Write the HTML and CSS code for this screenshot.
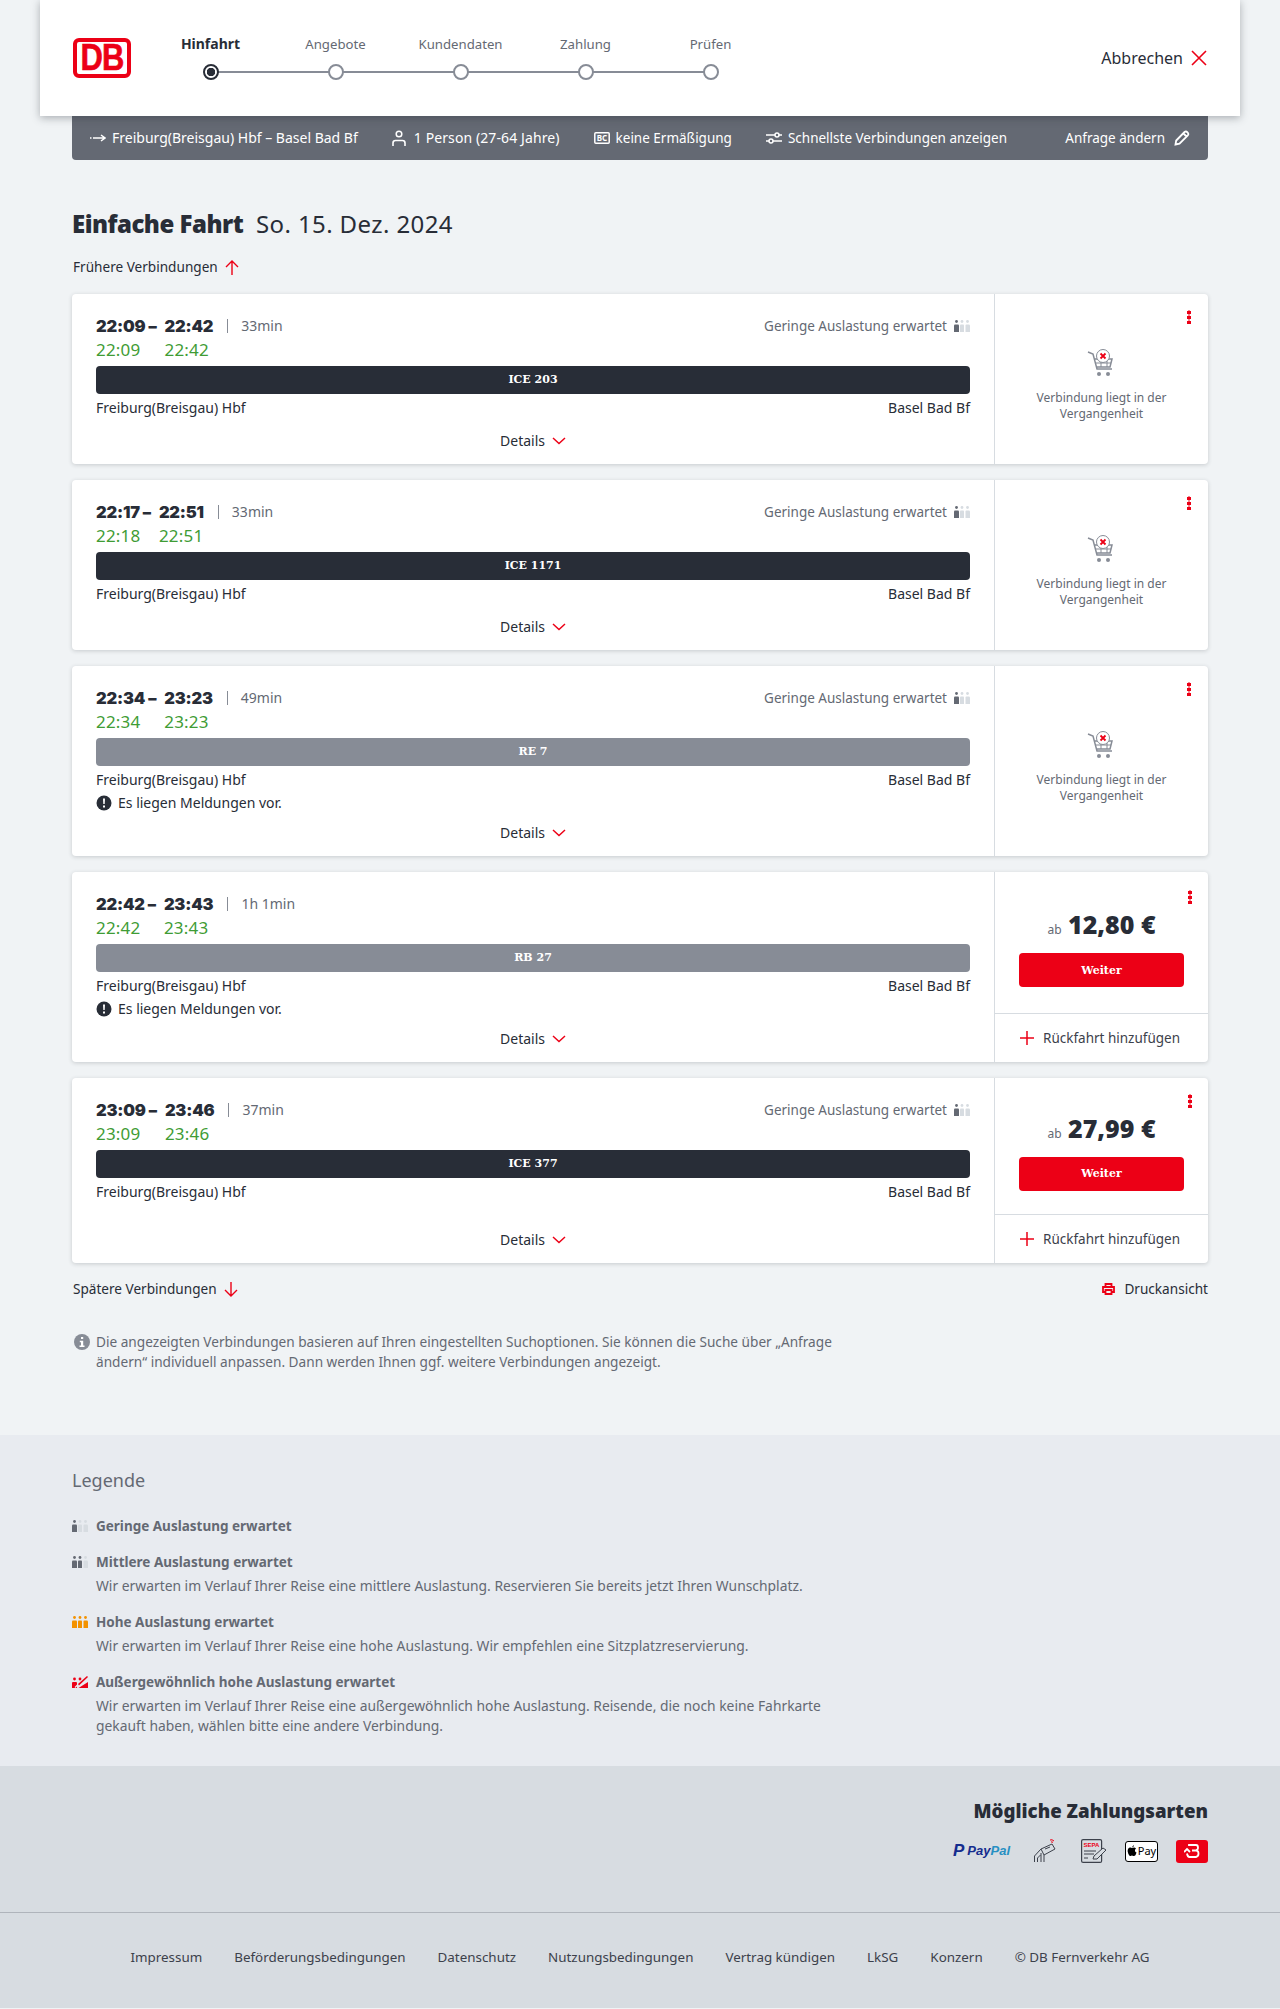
FILE: index.html
```html
<!DOCTYPE html>
<html lang="de">

<head>
    <meta charset="UTF-8">
    <meta name="viewport" content="width=device-width, initial-scale=1.0">
    <title>Verbindungen</title>
    <link rel="stylesheet" href="styles.css">
</head>

<body>
    <!-- Icons used more than once -->
    <svg class="defs" width="0" height="0">
        <symbol id="occ" viewBox="0 0 16 12">
            <circle cx="2.5" cy="1.5" r="1.4" fill="#646973"/>
            <path d="M0 5.5q0-1 1-1h3q1 0 1 1V12H0z" fill="#646973"/>
            <circle cx="8" cy="1.5" r="1.4" fill="#d7dce1"/>
            <path d="M6 5.5q0-1 .8-1h2.4q.8 0 .8 1V12H6z" fill="#d7dce1"/>
            <circle cx="13.5" cy="1.5" r="1.4" fill="#d7dce1"/>
            <path d="M11.500 5.500q0-1 .8-1h2.400q1.300 0 1.300 1V12h-4.500z" fill="#d7dce1"/>
        </symbol>
        <symbol id="cart" viewBox="0 0 30 30">
            <path d="M1 4l5 2 4 15h15M7 11h18l-2 8H9" fill="none" stroke="#878c96" stroke-width="1.500"/>
            <path d="M9 15h15M14 11v8M20 11v8" fill="none" stroke="#878c96" stroke-width="1"/>
            <circle cx="12" cy="26" r="2" fill="#878c96"/>
            <circle cx="21" cy="26" r="2" fill="#878c96"/>
            <circle cx="16" cy="8" r="6.500" fill="#fff" stroke="#878c96"/>
            <path d="M13.500 5.500l5 5M18.500 5.500l-5 5" stroke="#ec0016" stroke-width="1.800"/>
        </symbol>
        <symbol id="chev" viewBox="0 0 14 8">
            <path d="M1 1l6 5.500L13 1" fill="none" stroke="#ec0016" stroke-width="1.500"/>
        </symbol>
        <symbol id="excl" viewBox="0 0 16 16">
            <circle cx="8" cy="8" r="7.500" fill="#282d37"/>
            <path d="M7 3.500h2l-.3 5.500H7.300zM7 10.500h2v2H7z" fill="#fff"/>
        </symbol>
        <symbol id="plus" viewBox="0 0 16 16">
            <path d="M8 1v14M1 8h14" stroke="#ec0016" stroke-width="1.500"/>
        </symbol>
    </svg>

    <header class="topbar">
        <div class="logo"><span>DB</span></div>
        <ol class="steps">
            <li class="step current"><span class="step-name">Hinfahrt</span><i class="dot"></i></li>
            <li class="step"><span class="step-name">Angebote</span><i class="dot"></i></li>
            <li class="step"><span class="step-name">Kundendaten</span><i class="dot"></i></li>
            <li class="step"><span class="step-name">Zahlung</span><i class="dot"></i></li>
            <li class="step"><span class="step-name">Prüfen</span><i class="dot"></i></li>
        </ol>
        <a class="cancel">Abbrechen
            <svg width="16" height="16" viewBox="0 0 16 16"><path d="M1 1l14 14M15 1L1 15" stroke="#ec0016" stroke-width="1.600"/></svg>
        </a>
    </header>

    <div class="wrap">
        <div class="query">
            <span class="query-item">
                <svg width="16" height="8" viewBox="0 0 16 8"><path d="M0 4h1.500M3 4h11M11 1l4 3-4 3" fill="none" stroke="#fff" stroke-width="1.500"/></svg>
                Freiburg(Breisgau) Hbf – Basel Bad Bf
            </span>
            <span class="query-item query-person">
                <svg width="14" height="16" viewBox="0 0 14 16"><circle cx="7" cy="4" r="2.800" fill="none" stroke="#fff" stroke-width="1.500"/><path d="M1 16v-3q0-2.500 2.500-2.500h7q2.500 0 2.500 2.500v3" fill="none" stroke="#fff" stroke-width="1.600"/></svg>
                1 Person (27-64 Jahre)
            </span>
            <span class="query-item query-tight">
                <svg width="16" height="14" viewBox="0 0 16 14"><rect x=".8" y="1.800" width="14.400" height="10.400" rx="1" fill="none" stroke="#fff" stroke-width="1.500"/><text x="8" y="10" class="bc-text">BC</text></svg>
                keine Ermäßigung
            </span>
            <span class="query-item query-tight">
                <svg width="16" height="14" viewBox="0 0 16 14"><path d="M0 4h16M0 10h16" stroke="#fff" stroke-width="1.500"/><circle cx="11" cy="4" r="2" fill="#646973" stroke="#fff" stroke-width="1.500"/><circle cx="5" cy="10" r="2" fill="#646973" stroke="#fff" stroke-width="1.500"/></svg>
                Schnellste Verbindungen anzeigen
            </span>
            <a class="query-item query-tight query-edit">Anfrage ändern
                <svg width="16" height="16" viewBox="0 0 16 16"><path d="M1.500 14.500l.7-4L10.500 2q1.500-1.200 3 .3t.3 3l-8.300 8.300z M9.500 3.500l3 3" fill="none" stroke="#fff" stroke-width="1.800"/></svg>
            </a>
        </div>

        <h1 class="title"><b>Einfache Fahrt</b> So. 15. Dez. 2024</h1>

        <a class="page-link earlier">Frühere Verbindungen
            <svg width="14" height="15" viewBox="0 0 14 15"><path d="M7 15V1M1 7l6-6 6 6" fill="none" stroke="#ec0016" stroke-width="1.400"/></svg>
        </a>

        <!-- Connections -->
        <article class="card">
            <div class="card-main">
                <div class="card-head">
                    <div class="times">
                        <b>22:09 –</b><b>22:42</b><span class="duration">33min</span>
                        <span class="rt">22:09</span><span class="rt">22:42</span>
                    </div>
                    <span class="load">Geringe Auslastung erwartet <svg class="occ"><use href="#occ"/></svg></span>
                </div>
                <div class="train ice">ICE 203</div>
                <div class="stations"><span>Freiburg(Breisgau) Hbf</span><span>Basel Bad Bf</span></div>
                <a class="details">Details <svg class="chev"><use href="#chev"/></svg></a>
            </div>
            <div class="card-side past">
                <i class="kebab"></i>
                <svg class="cart"><use href="#cart"/></svg>
                <p>Verbindung liegt in der Vergangenheit</p>
            </div>
        </article>

        <article class="card">
            <div class="card-main">
                <div class="card-head">
                    <div class="times">
                        <b>22:17 –</b><b>22:51</b><span class="duration">33min</span>
                        <span class="rt">22:18</span><span class="rt">22:51</span>
                    </div>
                    <span class="load">Geringe Auslastung erwartet <svg class="occ"><use href="#occ"/></svg></span>
                </div>
                <div class="train ice">ICE 1171</div>
                <div class="stations"><span>Freiburg(Breisgau) Hbf</span><span>Basel Bad Bf</span></div>
                <a class="details">Details <svg class="chev"><use href="#chev"/></svg></a>
            </div>
            <div class="card-side past">
                <i class="kebab"></i>
                <svg class="cart"><use href="#cart"/></svg>
                <p>Verbindung liegt in der Vergangenheit</p>
            </div>
        </article>

        <article class="card">
            <div class="card-main">
                <div class="card-head">
                    <div class="times">
                        <b>22:34 –</b><b>23:23</b><span class="duration">49min</span>
                        <span class="rt">22:34</span><span class="rt">23:23</span>
                    </div>
                    <span class="load">Geringe Auslastung erwartet <svg class="occ"><use href="#occ"/></svg></span>
                </div>
                <div class="train regio">RE 7</div>
                <div class="stations"><span>Freiburg(Breisgau) Hbf</span><span>Basel Bad Bf</span></div>
                <div class="notice"><svg class="excl"><use href="#excl"/></svg> Es liegen Meldungen vor.</div>
                <a class="details">Details <svg class="chev"><use href="#chev"/></svg></a>
            </div>
            <div class="card-side past">
                <i class="kebab"></i>
                <svg class="cart"><use href="#cart"/></svg>
                <p>Verbindung liegt in der Vergangenheit</p>
            </div>
        </article>

        <article class="card">
            <div class="card-main">
                <div class="card-head">
                    <div class="times">
                        <b>22:42 –</b><b>23:43</b><span class="duration">1h 1min</span>
                        <span class="rt">22:42</span><span class="rt">23:43</span>
                    </div>
                </div>
                <div class="train regio">RB 27</div>
                <div class="stations"><span>Freiburg(Breisgau) Hbf</span><span>Basel Bad Bf</span></div>
                <div class="notice"><svg class="excl"><use href="#excl"/></svg> Es liegen Meldungen vor.</div>
                <a class="details">Details <svg class="chev"><use href="#chev"/></svg></a>
            </div>
            <div class="card-side">
                <div class="offer">
                    <div class="offer-inner">
                        <i class="kebab"></i>
                        <div class="price"><small>ab</small> 12,80 €</div>
                        <button class="next">Weiter</button>
                    </div>
                </div>
                <a class="return"><svg class="plus"><use href="#plus"/></svg> Rückfahrt hinzufügen</a>
            </div>
        </article>

        <article class="card">
            <div class="card-main">
                <div class="card-head">
                    <div class="times">
                        <b>23:09 –</b><b>23:46</b><span class="duration">37min</span>
                        <span class="rt">23:09</span><span class="rt">23:46</span>
                    </div>
                    <span class="load">Geringe Auslastung erwartet <svg class="occ"><use href="#occ"/></svg></span>
                </div>
                <div class="train ice">ICE 377</div>
                <div class="stations"><span>Freiburg(Breisgau) Hbf</span><span>Basel Bad Bf</span></div>
                <a class="details">Details <svg class="chev"><use href="#chev"/></svg></a>
            </div>
            <div class="card-side">
                <div class="offer">
                    <div class="offer-inner">
                        <i class="kebab"></i>
                        <div class="price"><small>ab</small> 27,99 €</div>
                        <button class="next">Weiter</button>
                    </div>
                </div>
                <a class="return"><svg class="plus"><use href="#plus"/></svg> Rückfahrt hinzufügen</a>
            </div>
        </article>

        <div class="after-list">
            <a class="page-link">Spätere Verbindungen
                <svg width="14" height="15" viewBox="0 0 14 15"><path d="M7 0v14M1 8l6 6 6-6" fill="none" stroke="#ec0016" stroke-width="1.400"/></svg>
            </a>
            <a class="page-link print">
                <svg width="13" height="12" viewBox="0 0 13 12"><path d="M3.500 3.500V1h6v2.500M3 9H1V4h11v5h-2M3.500 7h6v4h-6z" fill="none" stroke="#ec0016" stroke-width="1.800"/></svg>
                Druckansicht
            </a>
        </div>

        <div class="hint">
            <svg width="16" height="16" viewBox="0 0 16 16"><circle cx="8" cy="8" r="8" fill="#878c96"/><path d="M7 3h2.200v2H7zM5.800 6.800h3.400V11.500h1.300V13h-5v-1.500H7V8.300H5.800z" fill="#fff"/></svg>
            <p>Die angezeigten Verbindungen basieren auf Ihren eingestellten Suchoptionen. Sie können die Suche über „Anfrage ändern“ individuell anpassen. Dann werden Ihnen ggf. weitere Verbindungen angezeigt.</p>
        </div>
    </div>

    <section class="legend">
        <div class="wrap">
            <h2>Legende</h2>
            <dl class="legend-list">
                <div class="legend-item first">
                    <svg class="occ"><use href="#occ"/></svg>
                    <dt>Geringe Auslastung erwartet</dt>
                </div>
                <div class="legend-item">
                    <svg class="occ" viewBox="0 0 16 12"><circle cx="2.500" cy="1.500" r="1.400" fill="#646973"/><path d="M0 5.500q0-1 1-1h3q1 0 1 1V12H0z" fill="#646973"/><circle cx="8" cy="1.500" r="1.400" fill="#646973"/><path d="M6 5.500q0-1 .8-1h2.400q.8 0 .8 1V12H6z" fill="#646973"/><circle cx="13.500" cy="1.500" r="1.400" fill="#d7dce1"/><path d="M11.500 5.500q0-1 .8-1h2.400q1.300 0 1.300 1V12h-4.500z" fill="#d7dce1"/></svg>
                    <dt>Mittlere Auslastung erwartet</dt>
                    <dd>Wir erwarten im Verlauf Ihrer Reise eine mittlere Auslastung. Reservieren Sie bereits jetzt Ihren Wunschplatz.</dd>
                </div>
                <div class="legend-item">
                    <svg class="occ" viewBox="0 0 16 12"><circle cx="2.500" cy="1.500" r="1.400" fill="#f39200"/><path d="M0 5.500q0-1 1-1h3q1 0 1 1V12H0z" fill="#f39200"/><circle cx="8" cy="1.500" r="1.400" fill="#f39200"/><path d="M6 5.500q0-1 .8-1h2.400q.8 0 .8 1V12H6z" fill="#f39200"/><circle cx="13.500" cy="1.500" r="1.400" fill="#f39200"/><path d="M11.500 5.500q0-1 .8-1h2.400q1.300 0 1.300 1V12h-4.500z" fill="#f39200"/></svg>
                    <dt>Hohe Auslastung erwartet</dt>
                    <dd>Wir erwarten im Verlauf Ihrer Reise eine hohe Auslastung. Wir empfehlen eine Sitzplatzreservierung.</dd>
                </div>
                <div class="legend-item">
                    <svg class="occ" viewBox="0 0 16 12"><circle cx="2.500" cy="3" r="1.400" fill="#ec0016"/><path d="M0 7q0-1 1-1h3q1 0 1 1v5H0zM6.500 12h9.500V6z" fill="#ec0016"/><circle cx="8" cy="3" r="1.400" fill="#ec0016"/><path d="M3 11.500L14 .5" stroke="#e8ebf0" stroke-width="1.200"/><path d="M6 8L15 0l1 1-9 8.500z" fill="#ec0016"/></svg>
                    <dt>Außergewöhnlich hohe Auslastung erwartet</dt>
                    <dd>Wir erwarten im Verlauf Ihrer Reise eine außergewöhnlich hohe Auslastung. Reisende, die noch keine Fahrkarte gekauft haben, wählen bitte eine andere Verbindung.</dd>
                </div>
            </dl>
        </div>
    </section>

    <section class="payment">
        <div class="wrap">
            <h2>Mögliche Zahlungsarten</h2>
            <div class="pay-icons">
                <span class="paypal"><span class="pp-mark">P</span><em>Pay<span>Pal</span></em></span>
                <svg class="pay-hand" width="24" height="24" viewBox="0 0 24 24"><path d="M8 10l11-5 3 5-11 6zM1.500 23v-6l6.500-7M4.500 23v-4l3-3M8 14v9M11 16v7M12 10l5-2" fill="none" stroke="#3c414b" stroke-width="1"/><path d="M17 1q2-1 4 1M18 3q1-.500 2 .5" fill="none" stroke="#ec0016" stroke-width="1"/></svg>
                <svg class="pay-sepa" width="26" height="24" viewBox="0 0 26 24"><rect x=".6" y=".6" width="20" height="22.800" rx="1.500" fill="none" stroke="#3c414b" stroke-width="1.200"/><text x="10.500" y="8" class="sepa-text">SEPA</text><path d="M3 12h12M3 15h10M7 19H3" stroke="#3c414b"/><path d="M12 20l1-3 9-8 3 2-9 9z" fill="#d7dce1" stroke="#3c414b"/></svg>
                <span class="applepay"><svg width="10" height="12" viewBox="0 0 10 12"><path d="M7 0q.200 1.500-1.800 2.500Q5 1 7 0zM5 3q1-.500 2-.5 1.200 0 2 1-1.500 1-1 2.500.200 1 1.500 1.500-1 3.500-2.500 3.500-.700 0-1.300-.3-.800-.300-1.500 0-.500.300-1 .3-1 0-2-2.500Q0 6 1 4q1-1.500 2.500-1.400z" fill="#000"/></svg>Pay</span>
                <span class="bonus"><svg width="16" height="14" viewBox="0 0 16 14"><path d="M5 2V1h7q2 0 2 2.500T12 6.500H8m4 0q2.500 0 2.500 3T12 13H5.500q-2 0-2.500-3.500M0 8l3-3 3 3" fill="none" stroke="#fff" stroke-width="1.800"/></svg></span>
            </div>
        </div>
    </section>

    <footer class="footer">
        <a>Impressum</a>
        <a>Beförderungsbedingungen</a>
        <a>Datenschutz</a>
        <a>Nutzungsbedingungen</a>
        <a>Vertrag kündigen</a>
        <a>LkSG</a>
        <a>Konzern</a>
        <a>© DB Fernverkehr AG</a>
    </footer>
</body>

</html>
```

FILE: styles.css
```css
* {
    box-sizing: border-box;
}

body {
    margin: 0;
    background-color: #f0f3f5;
    color: #282d37;
    font-family: "Noto Sans", "Liberation Sans", sans-serif;
    font-size: 14px;
    line-height: 20px;
}

.defs {
    position: absolute;
}

.wrap {
    width: 1136px;
    margin: 0 auto;
}

/* Top bar */
.topbar {
    position: relative;
    z-index: 2;
    display: flex;
    align-items: flex-start;
    width: 1200px;
    height: 116px;
    margin: 0 auto;
    padding: 38px 33px 0;
    background-color: white;
    box-shadow: 0 2px 8px rgba(40, 45, 55, 0.35);
}

.logo {
    display: flex;
    justify-content: center;
    align-items: center;
    width: 58px;
    height: 40px;
    border: 4px solid #ec0016;
    border-radius: 6px;
    color: #ec0016;
    font-family: "Liberation Sans", sans-serif;
    font-size: 36px;
    font-weight: bold;
    letter-spacing: -1px;
    -webkit-text-stroke: 0.6px #ec0016;
}

.logo span {
    transform: scaleX(0.86);
}

.steps {
    display: flex;
    margin: -4px 0 0 17px;
    padding: 0;
    list-style: none;
}

.step {
    position: relative;
    display: flex;
    flex-direction: column;
    align-items: center;
    width: 125px;
    color: #646973;
    font-size: 13.2px;
}

.step-name {
    height: 20px;
    margin-bottom: 10px;
}

.step::after {
    content: "";
    position: absolute;
    top: 37px;
    left: 50%;
    width: 125px;
    height: 2px;
    background-color: #878c96;
}

.step:last-child::after {
    display: none;
}

.dot {
    position: relative;
    z-index: 1;
    width: 16px;
    height: 16px;
    border: 2px solid #878c96;
    border-radius: 50%;
    background-color: white;
}

.current {
    color: #282d37;
    font-size: 14px;
    font-weight: bold;
}

.current .dot {
    border-color: #282d37;
    background: radial-gradient(circle, #282d37 4px, white 4.500px);
}

.cancel {
    display: flex;
    align-items: center;
    gap: 8px;
    height: 40px;
    margin-left: auto;
    font-size: 16px;
}

/* Search summary */
.query {
    display: flex;
    align-items: center;
    gap: 34px;
    height: 44px;
    padding: 0 18px;
    border-radius: 0 0 4px 4px;
    background-color: #646973;
    color: white;
    font-size: 14px;
}

.query-item {
    display: flex;
    align-items: center;
    gap: 6px;
}

.query-person {
    gap: 8px;
    letter-spacing: 0.1px;
}

.query-tight {
    font-size: 13.5px;
}

.query-edit {
    gap: 9px;
    margin-left: auto;
}

.bc-text {
    fill: white;
    font-size: 8px;
    font-weight: bold;
    text-anchor: middle;
}

.title {
    margin: 46px 0 0;
    font-size: 24px;
    font-weight: normal;
    letter-spacing: 0.4px;
    line-height: 36px;
}

.title b {
    margin-right: 6px;
    font-weight: 900;
    letter-spacing: -0.5px;
}

.page-link {
    display: flex;
    align-items: center;
    gap: 7px;
    font-size: 13.6px;
}

.earlier {
    margin: 15px 0 17px 1px;
}

/* Connection cards */
.card {
    display: flex;
    min-height: 170px;
    margin-bottom: 16px;
    border-radius: 4px;
    background-color: white;
    box-shadow: 0 1px 4px rgba(40, 45, 55, 0.2);
}

.card-main {
    display: flex;
    flex-direction: column;
    flex: 1;
    padding: 20px 24px 11px;
}

.card-head {
    display: flex;
    justify-content: space-between;
    align-items: flex-start;
    height: 48px;
}

.times {
    display: grid;
    grid-template-columns: auto auto auto;
    justify-content: start;
    column-gap: 8px;
    line-height: 24px;
}

.times b {
    font-family: Inter, "Noto Sans", sans-serif;
    font-size: 16.5px;
    font-weight: 900;
    letter-spacing: -0.2px;
}

.duration {
    margin-left: 6px;
    padding-left: 14px;
    color: #646973;
    font-size: 14px;
    background: linear-gradient(#878c96, #878c96) left center / 1px 14px no-repeat;
}

.rt {
    color: #3f9c35;
    font-size: 17px;
    letter-spacing: 0.2px;
}

.load {
    display: flex;
    align-items: center;
    gap: 7px;
    height: 24px;
    color: #646973;
    font-size: 13.5px;
}

.occ {
    display: block;
    width: 16px;
    height: 12px;
}

.train {
    height: 28px;
    margin-top: 4px;
    border-radius: 4px;
    color: white;
    font-family: "DejaVu Serif", serif;
    font-size: 11px;
    font-weight: bold;
    line-height: 28px;
    text-align: center;
}

.ice {
    background-color: #282d37;
}

.regio {
    background-color: #878c96;
}

.stations {
    display: flex;
    justify-content: space-between;
    margin-top: 4px;
    font-size: 14px;
}

.notice {
    display: flex;
    align-items: center;
    gap: 6px;
    height: 22px;
    margin: 2px 0 7px;
    font-size: 14px;
}

.excl {
    width: 16px;
    height: 16px;
}

.details {
    display: flex;
    justify-content: center;
    align-items: center;
    gap: 7px;
    height: 24px;
    margin-top: auto;
    font-size: 14px;
}

.chev {
    width: 14px;
    height: 8px;
}

.card-side {
    position: relative;
    display: flex;
    flex-direction: column;
    flex: none;
    width: 214px;
    border-left: 1px solid #d7dce1;
}

.kebab {
    position: absolute;
    top: 16px;
    right: 17px;
    width: 4px;
    height: 14px;
    background: radial-gradient(circle, #ec0016 1.900px, transparent 2.200px) 0 0 / 4px 5px;
}

.past {
    justify-content: center;
    align-items: center;
    padding-top: 10px;
    color: #646973;
}

.cart {
    width: 30px;
    height: 30px;
    margin-top: 2px;
}

.past p {
    width: 150px;
    margin: 12px 0 0;
    font-size: 12px;
    line-height: 16px;
    text-align: center;
}

.offer {
    display: flex;
    flex: 1;
    align-items: center;
    padding: 23.5px 24px;
}

.offer-inner {
    position: relative;
    width: 100%;
}

.offer .kebab {
    top: -8px;
    right: -8px;
}

.price {
    height: 55px;
    padding-top: 8px;
    font-size: 25px;
    font-weight: 900;
    line-height: 36px;
    text-align: center;
}

.price small {
    color: #646973;
    font-size: 12px;
    font-weight: normal;
}

.next {
    display: block;
    width: 100%;
    height: 34px;
    border: 0;
    border-radius: 4px;
    background-color: #ec0016;
    color: white;
    font-family: "DejaVu Serif", serif;
    font-size: 11px;
    font-weight: bold;
}

.return {
    display: flex;
    align-items: center;
    gap: 8px;
    height: 49px;
    padding-left: 24px;
    border-top: 1px solid #d7dce1;
    color: #3c414b;
    font-size: 13.5px;
}

.plus {
    width: 16px;
    height: 16px;
}

.after-list {
    display: flex;
    justify-content: space-between;
    margin: 3px 0 0 1px;
}

.print {
    gap: 9px;
}

.hint {
    display: flex;
    gap: 6px;
    width: 780px;
    margin: 33px 0 0 2px;
    padding-bottom: 63px;
    color: #646973;
    font-size: 13.65px;
}

.hint svg {
    flex: none;
    margin-top: 2px;
}

.hint p {
    margin: 0;
}

/* Legend */
.legend {
    height: 331px;
    padding-top: 31px;
    background-color: #e8ebf0;
    color: #646973;
}

.legend h2 {
    margin: 0;
    font-size: 18px;
    font-weight: normal;
    line-height: 28px;
}

.legend-list {
    width: 760px;
    margin: 0;
}

.legend-item {
    display: grid;
    grid-template-columns: 16px 1fr;
    column-gap: 8px;
    align-items: center;
    margin-top: 16px;
    font-size: 13.85px;
}

.first {
    margin-top: 22px;
}

.legend-item dt {
    font-size: 13.5px;
    font-weight: bold;
}

.legend-item dd {
    grid-column: 2;
    margin: 4px 0 0;
}

/* Payment */
.payment {
    height: 146px;
    padding-top: 30px;
    background-color: #d7dce1;
}

.payment h2 {
    margin: 0;
    font-size: 18.7px;
    font-weight: 900;
    line-height: 30px;
    text-align: right;
}

.pay-icons {
    display: flex;
    justify-content: flex-end;
    align-items: center;
    gap: 18px;
    margin-top: 13px;
}

.paypal {
    display: flex;
    align-items: center;
    gap: 3px;
    color: #142c8e;
    font-family: "Liberation Sans", sans-serif;
    font-size: 13px;
    font-weight: bold;
}

.paypal em span {
    color: #2790c3;
}

.pp-mark {
    font-size: 17px;
    font-style: italic;
}

.pay-hand {
    margin-left: 5px;
}

.pay-sepa {
    margin-left: 6px;
}

.sepa-text {
    fill: #ec0016;
    font-family: "Liberation Sans", sans-serif;
    font-size: 6px;
    font-weight: bold;
    text-anchor: middle;
}

.applepay {
    display: flex;
    align-items: center;
    justify-content: center;
    gap: 1px;
    width: 33px;
    height: 21px;
    border: 1px solid black;
    border-radius: 3px;
    background-color: white;
    color: black;
    font-size: 11px;
}

.bonus {
    display: flex;
    justify-content: center;
    align-items: center;
    width: 32px;
    height: 23px;
    border-radius: 3px;
    background-color: #ec0016;
}

/* Footer */
.footer {
    display: flex;
    justify-content: center;
    gap: 32px;
    height: 96px;
    padding-top: 34px;
    border-top: 1px solid #afb4bb;
    background-color: #d7dce1;
    color: #3c414b;
    font-size: 13.4px;
}
```
